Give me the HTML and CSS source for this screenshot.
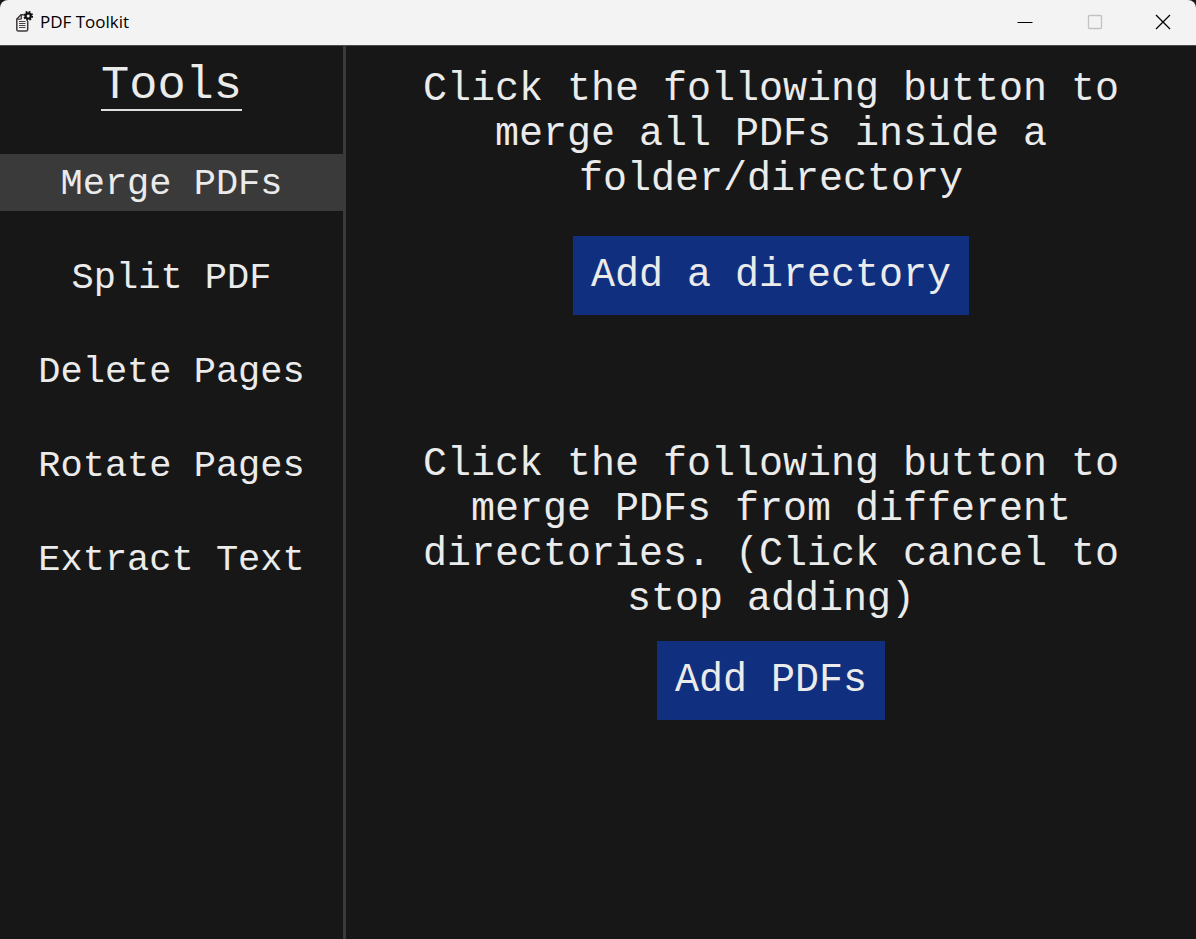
FILE: index.html
```html
<!DOCTYPE html>
<html lang="en">
<head>
<meta charset="utf-8">
<title>PDF Toolkit</title>
<link rel="stylesheet" href="styles.css">
</head>
<body>
<div class="window">
  <header class="titlebar">
    <svg class="app-icon" viewBox="0 0 18 22" aria-hidden="true">
      <path d="M8.500 3.700H6L1.800 8V18.400a1.700 1.700 0 0 0 1.700 1.700h7.500a1.700 1.700 0 0 0 1.700-1.700V10" fill="none" stroke="#3f383b" stroke-width="1.500"/>
      <path d="M6.300 4v3.400a.8.800 0 0 1-.8.800H2.200" fill="none" stroke="#3f383b" stroke-width="1.300"/>
      <path d="M4 10.500h6.500M4 12.500h6.500M4 14.500h6.500M4 16.500h6.500" stroke="#4a4346" stroke-width="1.100"/>
      <circle cx="13.200" cy="4.900" r="4" fill="none" stroke="#111" stroke-width="1.800" stroke-dasharray="1.800 1.340"/>
      <circle cx="13.200" cy="4.900" r="2.600" fill="#f3f3f3" stroke="#111" stroke-width="2.200"/>
    </svg>
    <h1 class="window-title">PDF Toolkit</h1>
    <div class="controls">
      <button class="control" type="button" aria-label="Minimize"><svg viewBox="0 0 16 16"><path d="M0.500 8.500h15" stroke="#000" fill="none"/></svg></button>
      <button class="control" type="button" aria-label="Maximize" disabled><svg viewBox="0 0 16 16"><rect x="1.500" y="1.500" width="13" height="13" rx="1" stroke="#c2c2c2" stroke-width="1.300" fill="none"/></svg></button>
      <button class="control" type="button" aria-label="Close"><svg viewBox="0 0 16 16"><path d="M1 1l14 14M15 1L1 15" stroke="#000" stroke-width="1.300" fill="none"/></svg></button>
    </div>
  </header>
  <div class="body">
    <aside class="sidebar">
      <h2 class="sidebar-title">Tools</h2>
      <nav class="tools">
        <button class="tool tool-active" type="button" aria-current="page">Merge PDFs</button>
        <button class="tool" type="button">Split PDF</button>
        <button class="tool" type="button">Delete Pages</button>
        <button class="tool" type="button">Rotate Pages</button>
        <button class="tool" type="button">Extract Text</button>
      </nav>
    </aside>
    <main class="content">
      <section class="action action-directory">
        <p class="hint">Click the following button to merge all PDFs inside a folder/directory</p>
        <button class="primary" type="button">Add a directory</button>
      </section>
      <section class="action action-files">
        <p class="hint">Click the following button to merge PDFs from different directories. (Click cancel to stop adding)</p>
        <button class="primary" type="button">Add PDFs</button>
      </section>
    </main>
  </div>
</div>
</body>
</html>
```

FILE: styles.css
```css
* {
  box-sizing: border-box;
}

body {
  margin: 0;
  background: #171717;
  color: #ebebeb;
  font-family: "Liberation Mono", "Courier New", monospace;
}

button {
  border: 0;
  color: inherit;
  font-family: inherit;
}

.window {
  display: flex;
  flex-direction: column;
  min-height: 100vh;
}

.titlebar {
  display: flex;
  align-items: center;
  height: 46px;
  padding: 0 0 2px 15px;
  background: #f3f3f3;
  border-bottom: 1px solid #4a4d4b;
  border-radius: 8px 8px 0 0;
  color: #000;
}

.app-icon {
  width: 18px;
  height: 22px;
}

.window-title {
  flex: 1;
  margin: 0 0 0 7px;
  font: 400 17px/22px "Open Sans", "Noto Sans", sans-serif;
}

.controls {
  display: flex;
  align-self: stretch;
}

.control {
  display: grid;
  place-items: center;
  width: 70px;
  padding: 0;
  background: transparent;
}

.control:last-child {
  width: 66px;
}

.control svg {
  width: 16px;
  height: 16px;
}

.body {
  display: flex;
  flex: 1;
}

.sidebar {
  flex: none;
  width: 346px;
  padding-top: 17px;
  border-right: 3px solid #3a3a3a;
  text-align: center;
}

.sidebar-title {
  width: fit-content;
  margin: 0 auto 43px;
  border-bottom: 2px solid #dedede;
  font-size: 47px;
  font-weight: 400;
  line-height: 46px;
}

.tools {
  display: flex;
  flex-direction: column;
  gap: 37px;
}

.tool {
  height: 57px;
  padding: 2px 0 0;
  background: transparent;
  font-size: 37px;
}

.tool-active {
  background: #3a3a3a;
}

.content {
  display: flex;
  flex: 1;
  flex-direction: column;
  gap: 127px;
  padding: 21px 60px;
}

.action {
  display: flex;
  flex-direction: column;
  align-items: center;
}

.action-directory {
  gap: 34px;
}

.action-files {
  gap: 19px;
}

.hint {
  margin: 0;
  font-size: 40px;
  line-height: 45px;
  text-align: center;
}

.primary {
  height: 79px;
  padding: 0 18px;
  background: #10307f;
  font-size: 40px;
}
```
